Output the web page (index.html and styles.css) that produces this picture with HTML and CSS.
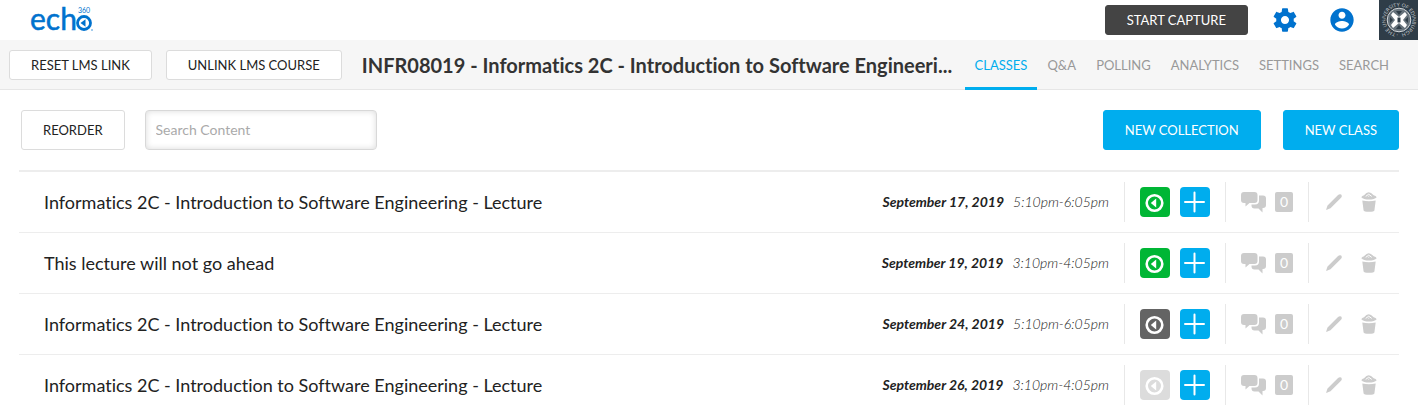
FILE: index.html
```
<!DOCTYPE html>
<html lang="en">
<head>
    <meta charset="UTF-8">
    <meta name="viewport" content="width=device-width, initial-scale=1.0">
    <title>INFR08019 - Classes</title>
    <link rel="stylesheet" href="styles.css">
</head>
<body>
    <!-- Shared icons -->
    <svg class="sprite" aria-hidden="true">
        <symbol id="icon-echo" viewBox="0 0 30 30">
            <circle cx="14.5" cy="16" r="7.8" fill="none" stroke="#fff" stroke-width="2.6"/>
            <path d="M10.800 16l5.400-4.400v8.800z" fill="#fff"/>
        </symbol>
        <symbol id="icon-plus" viewBox="0 0 30 30">
            <path d="M14.500 5.500v19M5 15h19" fill="none" stroke="#fff" stroke-width="2" stroke-linecap="round"/>
        </symbol>
        <symbol id="icon-chat" viewBox="0 0 25 21">
            <path d="M3 0h10.500q3 0 3 3v5q0 3-3 3H8.500l-4 3.500V11H3Q0 11 0 8V3q0-3 3-3z"/>
            <path d="M18 3.500H22q3 0 3 3V13q0 3-3 3h-.500v4.500L17.500 16.500H13.500q-3 0-3-3V12.500H14q4 0 4-4z"/>
        </symbol>
        <symbol id="icon-pencil" viewBox="0 0 16 16">
            <path d="M0 16l1.500-4.500L11.800 1.200q1.200-1.200 2.600-1t1.400 1.700q.1 1.100-1 2.200L4.500 14.300z"/>
        </symbol>
        <symbol id="icon-trash" viewBox="0 0 16 20">
            <path d="M1.300 8.500q6.700 1.600 13.400 0l-1.300 10q-.2 1.300-5.400 1.300t-5.400-1.300z"/>
            <path d="M.3 5.200Q1 3.900 3 3.300 5.500.3 7.700.3T12.700 3.300q2.300.6 3 1.900Q13.500 7.600 8 7.600T.3 5.200z"/>
            <path d="M4.700 4.400L7.700 2.200l3 2.200M7.700 3.800v.8" fill="none" stroke="#fff"/>
        </symbol>
    </svg>

    <header class="top-bar">
        <a href="#" class="logo" aria-label="echo360">
            <svg width="70" height="40" viewBox="0 0 70 40">
                <text class="logo-name" x="5" y="30">ech</text>
                <circle cx="59" cy="23" r="6.500" fill="none" stroke="#0072ce" stroke-width="2.800"/>
                <path d="M55.500 23l5-3.800v7.600z" fill="#0072ce"/>
                <text class="logo-number" x="53" y="13">360</text>
                <circle cx="67" cy="30" r=".7" fill="#0072ce"/>
            </svg>
        </a>
        <div class="top-actions">
            <button class="btn btn-dark">START CAPTURE</button>
            <button class="icon-btn" aria-label="Settings">
                <svg width="28" height="28" viewBox="0 0 24 24">
                    <path fill="#0072ce" d="M19.430 12.980c.04-.32.07-.64.07-.98s-.03-.66-.07-.98l2.110-1.650c.19-.15.24-.42.12-.64l-2-3.460c-.12-.22-.39-.3-.61-.22l-2.490 1c-.52-.4-1.080-.73-1.690-.98l-.38-2.650C14.460 2.180 14.250 2 14 2h-4c-.25 0-.46.18-.49.42l-.38 2.650c-.61.25-1.170.59-1.690.98l-2.490-1c-.23-.09-.49 0-.61.22l-2 3.460c-.13.22-.07.49.12.64l2.110 1.650c-.04.32-.07.65-.07.98s.03.66.07.98l-2.110 1.650c-.19.15-.24.42-.12.64l2 3.460c.12.22.39.3.61.22l2.490-1c.52.4 1.080.73 1.690.98l.38 2.650c.03.24.24.42.49.42h4c.25 0 .46-.18.49-.42l.38-2.650c.61-.25 1.170-.59 1.690-.98l2.490 1c.23.09.49 0 .61-.22l2-3.460c.12-.22.07-.49-.12-.64l-2.110-1.650zM12 15.500c-1.930 0-3.500-1.570-3.500-3.500s1.570-3.500 3.500-3.500 3.500 1.570 3.500 3.500-1.570 3.500-3.500 3.500z"/>
                </svg>
            </button>
            <button class="icon-btn" aria-label="Account">
                <svg width="28" height="28" viewBox="0 0 24 24">
                    <path fill="#0072ce" d="M12 2C6.480 2 2 6.480 2 12s4.480 10 10 10 10-4.480 10-10S17.520 2 12 2zm0 3c1.660 0 3 1.340 3 3s-1.340 3-3 3-3-1.340-3-3 1.340-3 3-3zm0 14.200c-2.500 0-4.710-1.280-6-3.220.03-1.990 4-3.080 6-3.080 1.990 0 5.970 1.090 6 3.080-1.290 1.940-3.500 3.220-6 3.220z"/>
                </svg>
            </button>
            <svg class="seal" width="39" height="40" viewBox="0 0 39 40" role="img" aria-label="The University of Edinburgh">
                <rect width="39" height="40" fill="#2f3d48"/>
                <path id="seal-ring" d="M20 33.500A13.500 13.500 0 1 1 20.010 33.500" fill="none"/>
                <text class="seal-text"><textPath href="#seal-ring" startOffset="1">· THE UNIVERSITY OF EDINBURGH</textPath></text>
                <circle cx="20" cy="20" r="11.800" fill="#66727b" stroke="#d5d9dc"/>
                <path d="M14 12l6 5 6-5 2 3-4 5 4 5-2 3-6-5-6 5-2-3 4-5-4-5z" fill="#fff"/>
                <path d="M17 11h6l-3 4zM17 29h6l-3-4zM11 17v6l3-3zM29 17v6l-3-3z" fill="#2f3d48"/>
                <path d="M18.500 17.500h3v5h-3z" fill="#2f3d48"/>
            </svg>
        </div>
    </header>

    <div class="course-bar">
        <button class="btn btn-small">RESET LMS LINK</button>
        <button class="btn btn-small">UNLINK LMS COURSE</button>
        <h1 class="course-title">INFR08019 - Informatics 2C - Introduction to Software Engineeri...</h1>
        <nav class="tabs">
            <a href="#" class="tab active">CLASSES</a>
            <a href="#" class="tab">Q&amp;A</a>
            <a href="#" class="tab">POLLING</a>
            <a href="#" class="tab">ANALYTICS</a>
            <a href="#" class="tab">SETTINGS</a>
            <a href="#" class="tab">SEARCH</a>
        </nav>
    </div>

    <main class="content">
        <div class="toolbar">
            <button class="btn">REORDER</button>
            <input type="text" class="search" placeholder="Search Content" aria-label="Search Content">
            <div class="toolbar-right">
                <button class="btn btn-blue">NEW COLLECTION</button>
                <button class="btn btn-blue">NEW CLASS</button>
            </div>
        </div>

        <ul class="class-list">
            <li class="class-row">
                <span class="class-name">Informatics 2C - Introduction to Software Engineering - Lecture</span>
                <span class="class-date"><b>September 17, 2019</b><span class="class-time">5:10pm-6:05pm</span></span>
                <div class="group media">
                    <button class="square green" aria-label="Capture"><svg width="30" height="30"><use href="#icon-echo"/></svg></button>
                    <button class="square blue" aria-label="Add"><svg width="30" height="30"><use href="#icon-plus"/></svg></button>
                </div>
                <div class="group comments">
                    <svg width="25" height="21"><use href="#icon-chat"/></svg>
                    <span class="count">0</span>
                </div>
                <div class="group tools">
                    <button class="icon-btn" aria-label="Edit"><svg width="16" height="16"><use href="#icon-pencil"/></svg></button>
                    <button class="icon-btn" aria-label="Delete"><svg width="16" height="20"><use href="#icon-trash"/></svg></button>
                </div>
            </li>
            <li class="class-row">
                <span class="class-name">This lecture will not go ahead</span>
                <span class="class-date"><b>September 19, 2019</b><span class="class-time">3:10pm-4:05pm</span></span>
                <div class="group media">
                    <button class="square green" aria-label="Capture"><svg width="30" height="30"><use href="#icon-echo"/></svg></button>
                    <button class="square blue" aria-label="Add"><svg width="30" height="30"><use href="#icon-plus"/></svg></button>
                </div>
                <div class="group comments">
                    <svg width="25" height="21"><use href="#icon-chat"/></svg>
                    <span class="count">0</span>
                </div>
                <div class="group tools">
                    <button class="icon-btn" aria-label="Edit"><svg width="16" height="16"><use href="#icon-pencil"/></svg></button>
                    <button class="icon-btn" aria-label="Delete"><svg width="16" height="20"><use href="#icon-trash"/></svg></button>
                </div>
            </li>
            <li class="class-row">
                <span class="class-name">Informatics 2C - Introduction to Software Engineering - Lecture</span>
                <span class="class-date"><b>September 24, 2019</b><span class="class-time">5:10pm-6:05pm</span></span>
                <div class="group media">
                    <button class="square dark" aria-label="Capture"><svg width="30" height="30"><use href="#icon-echo"/></svg></button>
                    <button class="square blue" aria-label="Add"><svg width="30" height="30"><use href="#icon-plus"/></svg></button>
                </div>
                <div class="group comments">
                    <svg width="25" height="21"><use href="#icon-chat"/></svg>
                    <span class="count">0</span>
                </div>
                <div class="group tools">
                    <button class="icon-btn" aria-label="Edit"><svg width="16" height="16"><use href="#icon-pencil"/></svg></button>
                    <button class="icon-btn" aria-label="Delete"><svg width="16" height="20"><use href="#icon-trash"/></svg></button>
                </div>
            </li>
            <li class="class-row">
                <span class="class-name">Informatics 2C - Introduction to Software Engineering - Lecture</span>
                <span class="class-date"><b>September 26, 2019</b><span class="class-time">3:10pm-4:05pm</span></span>
                <div class="group media">
                    <button class="square light" aria-label="Capture"><svg width="30" height="30"><use href="#icon-echo"/></svg></button>
                    <button class="square blue" aria-label="Add"><svg width="30" height="30"><use href="#icon-plus"/></svg></button>
                </div>
                <div class="group comments">
                    <svg width="25" height="21"><use href="#icon-chat"/></svg>
                    <span class="count">0</span>
                </div>
                <div class="group tools">
                    <button class="icon-btn" aria-label="Edit"><svg width="16" height="16"><use href="#icon-pencil"/></svg></button>
                    <button class="icon-btn" aria-label="Delete"><svg width="16" height="20"><use href="#icon-trash"/></svg></button>
                </div>
            </li>
        </ul>
    </main>
</body>
</html>
```
FILE: styles.css
```
* {
    margin: 0;
    padding: 0;
    box-sizing: border-box;
    font-family: Lato, 'Open Sans', sans-serif;
}

body {
    background: #fff;
    color: #333;
    font-size: 14px;
    font-variant-ligatures: none;
}

svg {
    display: block;
}

.sprite {
    display: none;
}

/* Buttons */
.btn {
    height: 40px;
    padding: 0 21px;
    background: #fff;
    border: 1px solid #dcdcdc;
    border-radius: 3px;
    color: #222;
    font-size: 13px;
    white-space: nowrap;
    cursor: pointer;
}

.btn-small {
    height: 30px;
}

.btn-dark {
    height: 30px;
    background: #444;
    border-color: #444;
    color: #fff;
}

.btn-blue {
    background: #00adee;
    border-color: #00adee;
    color: #fff;
}

.icon-btn {
    background: none;
    border: none;
    cursor: pointer;
}

/* Top bar */
.top-bar {
    display: flex;
    justify-content: space-between;
    height: 40px;
    padding-left: 25px;
}

.logo-name {
    font-size: 30px;
    fill: #0072ce;
    stroke: #0072ce;
    stroke-width: 0.5px;
}

.logo-number {
    font-size: 7px;
    fill: #0072ce;
}

.top-actions {
    display: flex;
    align-items: center;
}

.top-actions .icon-btn {
    margin-left: 23px;
}

.top-actions .icon-btn + .icon-btn {
    margin-left: 29px;
}

.seal {
    margin-left: 23px;
}

.seal-text {
    font-size: 5px;
    fill: #c3c8cc;
}

/* Course bar */
.course-bar {
    display: flex;
    align-items: center;
    height: 50px;
    padding: 0 19px 0 9px;
    background: #f6f6f6;
    border-bottom: 1px solid #e6e6e6;
}

.course-bar .btn {
    margin-right: 14px;
}

.course-title {
    flex: 1;
    min-width: 0;
    padding-left: 6px;
    font-size: 20px;
    font-weight: bold;
    white-space: nowrap;
    overflow: hidden;
    text-overflow: ellipsis;
}

.tabs {
    display: flex;
    align-self: stretch;
}

.tab {
    height: 50px;
    padding: 0 10px;
    border-bottom: 3px solid transparent;
    color: #999;
    font-size: 13px;
    line-height: 50px;
    text-decoration: none;
}

.tab.active {
    border-bottom-color: #00adee;
    color: #00adee;
}

/* Content */
.content {
    padding: 20px 19px 0;
}

.toolbar {
    display: flex;
    align-items: center;
    gap: 20px;
    padding: 0 0 20px 2px;
}

.search {
    width: 232px;
    height: 40px;
    padding: 0 10px 2px;
    border: 1px solid #d8d8d8;
    border-radius: 4px;
    box-shadow: inset 0 0 6px rgba(0, 0, 0, 0.15);
    color: #333;
    font-size: 14px;
}

.search::placeholder {
    color: #aaa;
}

.toolbar-right {
    display: flex;
    gap: 22px;
    margin-left: auto;
}

.class-list {
    border-top: 2px solid #ededed;
    list-style: none;
}

.class-row {
    display: flex;
    align-items: center;
    height: 61px;
    padding-left: 25px;
    border-bottom: 1px solid #ededed;
}

.class-name {
    flex: 1;
    color: #222;
    font-size: 18px;
}

.class-date {
    display: flex;
    gap: 9px;
    margin-right: 15px;
    padding-bottom: 2px;
    color: #222;
    font-size: 14px;
    font-style: italic;
}

.class-time {
    font-weight: 300;
}

.group {
    display: flex;
    align-items: center;
    height: 40px;
    border-left: 1px solid #e8e8e8;
    color: #ccc;
    fill: #ccc;
}

.media {
    gap: 10px;
    padding: 0 15px;
}

.comments {
    gap: 9px;
    padding: 0 15px;
}

.tools {
    gap: 19px;
    padding: 0 22px 0 17px;
}

.square {
    width: 30px;
    height: 30px;
    border: none;
    border-radius: 4px;
    cursor: pointer;
}

.green {
    background: #00b635;
}

.blue {
    background: #00adee;
}

.dark {
    background: #646464;
}

.light {
    background: #dcdcdc;
}

.count {
    width: 18px;
    height: 20px;
    background: #ccc;
    border-radius: 2px;
    color: #fff;
    font-size: 14px;
    line-height: 20px;
    text-align: center;
}
```
